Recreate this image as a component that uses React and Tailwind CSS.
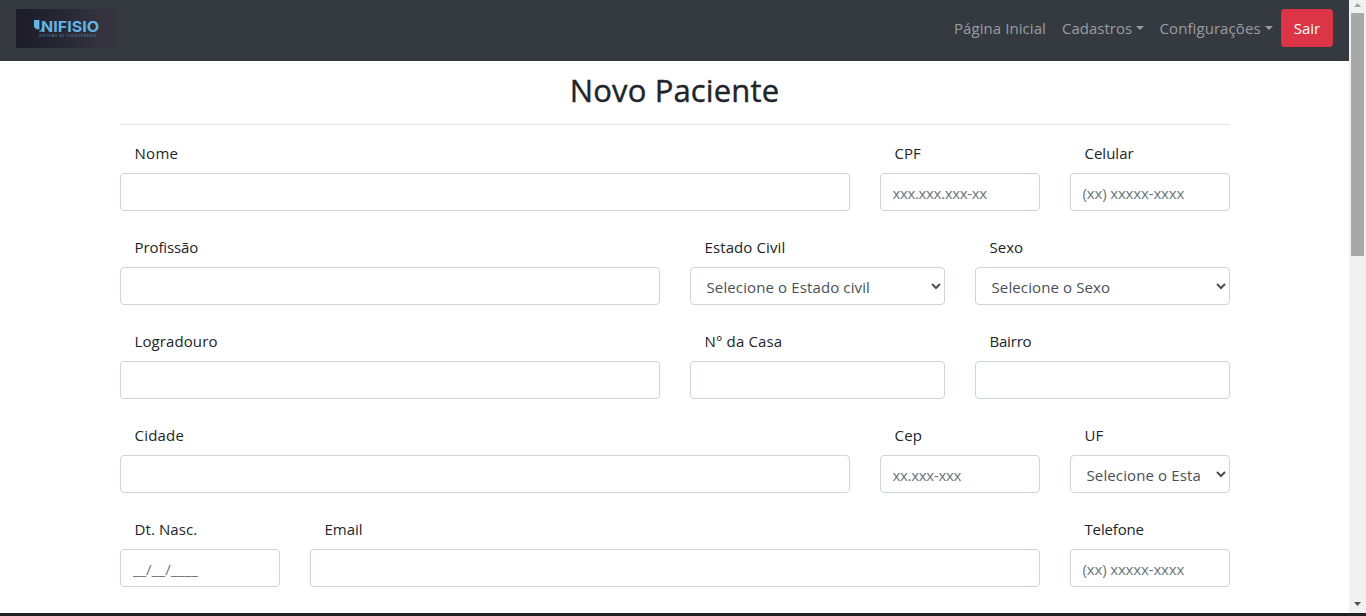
import React from "react";

const rows = [
  [
    { label: "Nome", span: "col-span-8", ls: "tracking-[0.3px]" },
    { label: "CPF", span: "col-span-2", ls: "tracking-[0px]", placeholder: "xxx.xxx.xxx-xx", pls: "placeholder:tracking-[-0.35px]" },
    { label: "Celular", span: "col-span-2", ls: "tracking-[0px]", placeholder: "(xx) xxxxx-xxxx", pls: "placeholder:tracking-[-0.15px]" },
  ],
  [
    { label: "Profissão", span: "col-span-6", ls: "tracking-[-0.1px]" },
    { label: "Estado Civil", span: "col-span-3", ls: "tracking-[0.1px]", option: "Selecione o Estado civil" },
    { label: "Sexo", span: "col-span-3", ls: "tracking-[0px]", option: "Selecione o Sexo" },
  ],
  [
    { label: "Logradouro", span: "col-span-6", ls: "tracking-[0.1px]" },
    { label: "N° da Casa", span: "col-span-3", ls: "tracking-[0.15px]" },
    { label: "Bairro", span: "col-span-3", ls: "tracking-[-0.2px]" },
  ],
  [
    { label: "Cidade", span: "col-span-8", ls: "tracking-[0.2px]" },
    { label: "Cep", span: "col-span-2", ls: "tracking-[0.2px]", placeholder: "xx.xxx-xxx", pls: "placeholder:tracking-[-0.3px]" },
    { label: "UF", span: "col-span-2", ls: "tracking-[0px]", option: "Selecione o Estado" },
  ],
  [
    { label: "Dt. Nasc.", span: "col-span-2", ls: "tracking-[0.1px]", placeholder: "__/__/____", pls: "placeholder:tracking-[0.2px]" },
    { label: "Email", span: "col-span-8", ls: "tracking-[0px]" },
    { label: "Telefone", span: "col-span-2", ls: "tracking-[-0.15px]", placeholder: "(xx) xxxxx-xxxx", pls: "placeholder:tracking-[-0.15px]" },
  ],
];

function Logo() {
  return (
    <svg width="102" height="39" viewBox="0 0 102 39" className="block">
      <defs>
        <linearGradient id="logoBg" x1="0" y1="0" x2="1" y2="0">
          <stop offset="0" stopColor="#1c1b28" />
          <stop offset="0.5" stopColor="#292835" />
          <stop offset="0.8" stopColor="#34323f" />
          <stop offset="1" stopColor="#363541" />
        </linearGradient>
      </defs>
      <rect width="102" height="39" fill="url(#logoBg)" />
      <path d="M18 11h5.400v9.500c-3.400 0-5.400-1.300-5.400-3.800z" fill="#62b5e5" />
      <path d="M23.500 22.300c1.900-.2 2.900-1.100 3-3.300" fill="none" stroke="#62b5e5" strokeWidth="1.200" />
      <text x="25" y="22.500" textLength="58" lengthAdjust="spacingAndGlyphs" fontFamily="Inter, sans-serif" fontWeight="700" fontSize="15" fill="#62b5e5">NIFISIO</text>
      <text x="23" y="28.200" textLength="57" fontFamily="Inter, sans-serif" fontWeight="500" fontSize="3.200" fill="#4f8fb8">SISTEMA DE FISIOTERAPIA</text>
    </svg>
  );
}

function Caret() {
  return (
    <svg width="8" height="4" viewBox="0 0 8 4" className="ml-1 mb-px" fill="currentColor">
      <path d="M0 0h8L4 4z" />
    </svg>
  );
}

function Field({ label, span, ls, placeholder, pls, option }) {
  return (
    <div className={span}>
      <label className={`mb-2 block h-6 pl-[15px] leading-6 ${ls}`}>{label}</label>
      {option ? (
        <select className="block h-[38px] w-full rounded border border-[#ced4da] bg-white pt-2 pr-[13px] pb-1.5 pl-3 tracking-[0.12px] text-[#495057]">
          <option>{option}</option>
        </select>
      ) : (
        <input
          placeholder={placeholder}
          className={`block h-[38px] w-full rounded border border-[#ced4da] bg-white px-3 pt-2 pb-1.5 placeholder:text-[#6c757d] ${pls || ""}`}
        />
      )}
    </div>
  );
}

export default function App() {
  return (
    <div className="flex h-[616px] w-[1366px] flex-col overflow-hidden bg-[#202124] font-['Open_Sans','Noto_Sans',sans-serif] text-[15px] text-[#212529]">
      <div className="flex h-[613px]">
        <div className="w-[1349px] overflow-hidden bg-white">
          <nav className="flex h-[61px] justify-between bg-[#343a40] pt-[9px] pr-4 pl-4">
            <Logo />
            <div className="flex h-[38px] items-center text-[#9a9da0]">
              <a className="w-[108px] tracking-[0.07px]">Página Inicial</a>
              <a className="flex w-[97.5px] items-center">Cadastros<Caret /></a>
              <a className="flex w-[121.5px] items-center tracking-[0.08px]">Configurações<Caret /></a>
              <button className="h-[38px] w-[52px] rounded bg-[#dc3545] text-white">Sair</button>
            </div>
          </nav>
          <main className="mx-auto w-[1110px]">
            <h1 className="flex h-[63px] items-center justify-center pb-[5px] text-[31px] font-medium tracking-[0.15px] [-webkit-text-stroke:0.4px_#212529]">Novo Paciente</h1>
            <hr className="mb-4 border-t border-[#e5e5e5]" />
            <form className="flex flex-col gap-6">
              {rows.map((row, i) => (
                <div key={i} className="grid grid-cols-12 gap-x-[30px]">
                  {row.map((f) => (
                    <Field key={f.label} {...f} />
                  ))}
                </div>
              ))}
            </form>
          </main>
        </div>
        <div className="flex w-[17px] flex-col items-center bg-[#f1f1f1]">
          <svg width="17" height="13" viewBox="0 0 17 13" fill="#a3a3a3"><path d="M5 7l3.500-4L12 7z" /></svg>
          <div className="h-[243px] w-[13px] bg-[#a8a8a8]" />
          <svg width="17" height="17" viewBox="0 0 17 17" fill="#505050" className="mt-auto"><path d="M5 6h7l-3.500 4z" /></svg>
        </div>
      </div>
    </div>
  );
}
